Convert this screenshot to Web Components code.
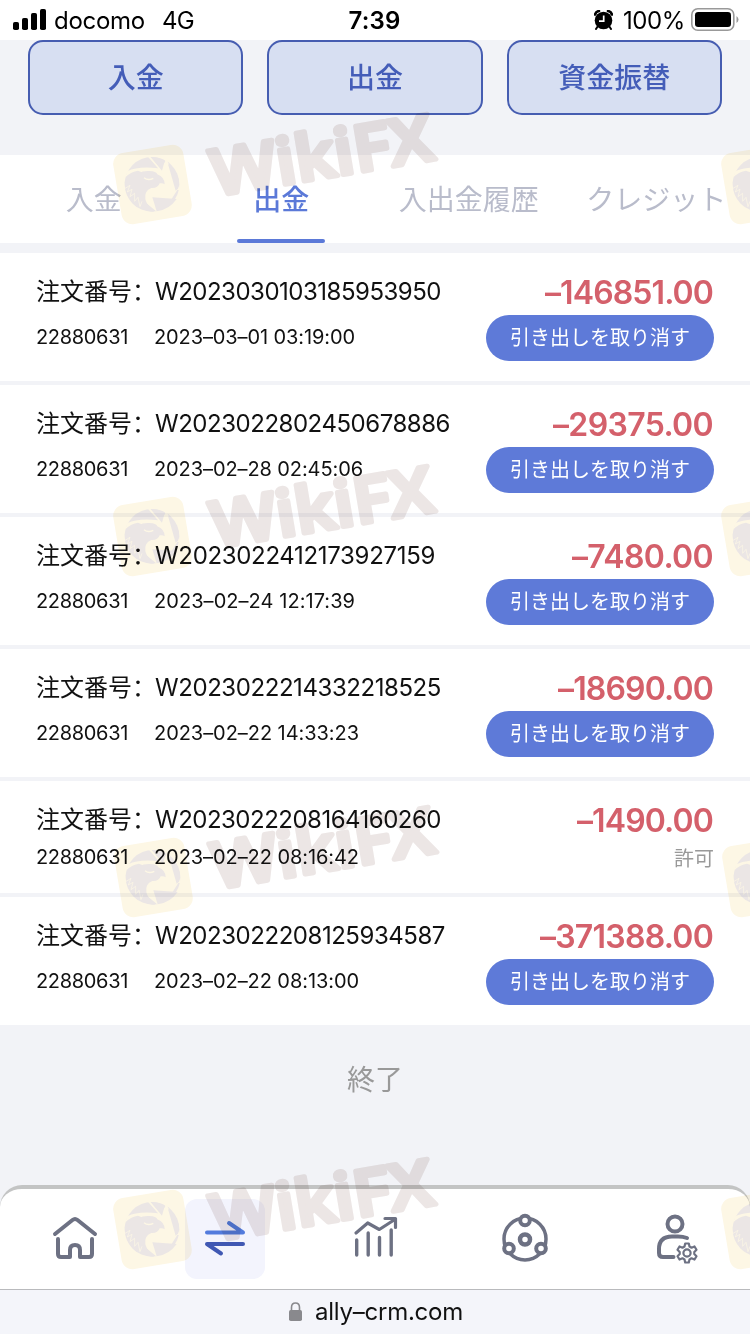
<!DOCTYPE html>
<html lang="ja">
<head>
<meta charset="utf-8">
<title>出金</title>
<style>
  body {
    margin: 0;
    width: 750px;
    height: 1334px;
    overflow: hidden;
    background: #f2f3f7;
    font-family: Inter, "Noto Sans CJK JP", sans-serif;
  }
</style>
</head>
<body>
<crm-page></crm-page>

<template id="status-bar">
  <style>
    :host { display: flex; height: 40px; padding: 0 13px; background: #fff; color: #000; font-size: 24px; }
    div { flex: 1; display: flex; align-items: center; }
    .time { flex: none; line-height: 41px; margin-right: 3px; font-weight: 600; }
    .right { justify-content: flex-end; }
    .net { margin-left: 17px; }
    .signal { margin-right: 8px; }
    .alarm { margin-right: 10px; }
    .battery { margin: 0 0 2px 6px; }
    .right { margin-right: -2px; }
  </style>
  <div>
    <svg class="signal" width="33" height="22" viewBox="0 0 33 22">
      <rect x="0" y="13" width="6" height="8" rx="1.8"/>
      <rect x="9" y="9" width="6" height="12" rx="1.8"/>
      <rect x="18" y="4" width="6" height="17" rx="1.8"/>
      <rect x="27" y="0" width="6" height="21" rx="1.8"/>
    </svg>
    <fit-text width="91">docomo</fit-text>
    <fit-text class="net" width="32">4G</fit-text>
  </div>
  <fit-text class="time" width="52">7:39</fit-text>
  <div class="right">
    <svg class="alarm" width="19" height="20" viewBox="0 0 19 20">
      <circle cx="9.5" cy="10.5" r="8.8"/>
      <path d="M1 4.5Q2 1.5 5 1M18 4.5Q17 1.5 14 1" fill="none" stroke="#000" stroke-width="2.6" stroke-linecap="round"/>
      <path d="M4 16L2 19M15 16L17 19" stroke="#000" stroke-width="2" stroke-linecap="round"/>
      <path d="M9.7 5.5V11.2H5" fill="none" stroke="#fff" stroke-width="1.7"/>
    </svg>
    <fit-text width="62">100%</fit-text>
    <svg class="battery" width="48" height="23" viewBox="0 0 48 23">
      <rect x=".8" y=".8" width="42" height="21.4" rx="6" fill="none" stroke="#999" stroke-width="1.6"/>
      <rect x="4" y="4" width="36" height="15" rx="3.2"/>
      <path d="M45.5 8V15Q47.5 13.500 47.5 11.500Q47.5 9.500 45.5 8" fill="#999"/>
    </svg>
  </div>
</template>

<template id="action-button">
  <style>
    :host {
      flex: 1; display: flex; align-items: center; justify-content: center; box-sizing: border-box;
      height: 75px; padding-bottom: 3px; border: 2px solid #465db1; border-radius: 15px;
      background: #d7dff2; color: #445db8; font-size: 28px; font-weight: 500;
    }
  </style>
  <slot></slot>
</template>

<template id="tab-item">
  <style>
    :host { flex: 1; display: flex; justify-content: center; color: #b9bccb; font-size: 28px; white-space: nowrap; }
    div { display: flex; flex-direction: column; height: 88px; }
    span { height: 84px; padding: 0 16px; line-height: 90px; }
    i { height: 4px; border-radius: 2px; }
    :host([active]) { color: #5b79d8; font-weight: 500; }
    :host([active]) i { background: #5b79d8; }
  </style>
  <div><span><slot></slot></span><i></i></div>
</template>

<template id="order-row">
  <style>
    :host { display: flex; justify-content: space-between; box-sizing: border-box; height: 128px; padding: 23px 36px 0; background: #fff; color: #111; }
    :host([done]) { height: 112px; }
    .title { display: flex; height: 32px; font-size: 24px; line-height: 31px; }
    .title b { width: 120px; line-height: 28px; font-weight: 400; font-family: "Noto Sans CJK SC", sans-serif; }
    .number { margin-left: -1px; }
    .meta { display: flex; align-items: center; height: 46px; margin-top: 6px; gap: 26px; font-size: 20px; }
    .side { display: flex; flex-direction: column; align-items: flex-end; }
    .amount { height: 32px; margin-right: 1px; line-height: 33px; color: #d4606b; font-size: 32px; font-weight: 600; }
    .cancel { height: 46px; margin-top: 7px; padding: 0 24px; border-radius: 23px; background: #5e7ad8; color: #fff; font-size: 20px; line-height: 46px; }
    .state { margin-top: 5px; color: #999; font-size: 20px; line-height: 37px; }
    :host([done]) .meta { height: 30px; }
  </style>
  <div>
    <div class="title"><b lang="zh-CN">注文番号：</b><fit-text class="number"></fit-text></div>
    <div class="meta"><fit-text width="92">22880631</fit-text><fit-text class="date"></fit-text></div>
  </div>
  <div class="side">
    <fit-text class="amount"></fit-text>
    <div class="button"></div>
  </div>
</template>

<template id="nav-bar">
  <style>
    :host { display: block; height: 104px; background: #f2f3f7; }
    nav { display: flex; box-sizing: border-box; height: 104px; border-top: 4px solid #c3c4c4; border-radius: 22px 22px 0 0; background: #fff; }
    a { flex: 1; display: flex; justify-content: center; padding-top: 10px; }
    svg { width: 80px; height: 80px; border-radius: 12px; fill: none; stroke: #6d7183; stroke-width: 4; stroke-linecap: round; stroke-linejoin: round; }
    .active svg { background: #f3f4fd; }
  </style>
  <nav>
    <a><svg viewBox="0 0 80 80">
      <path d="M20 35L37.500 21Q40 19 42.500 21L60 35M23 40V55Q23 58 26 58H35V51Q35 46 40 46Q45 46 45 51V58H54Q57 58 57 55V40"/>
    </svg></a>
    <a class="active"><svg viewBox="0 0 80 80">
      <path d="M22 33.500H58L44 24" stroke="#527bdd"/>
      <path d="M58 45H22L36 54.500" stroke="#4058b3"/>
    </svg></a>
    <a><svg viewBox="0 0 80 80">
      <path d="M21 34L32.700 24L44.300 30.500L59 21M50 19.500H60.500V28.500" stroke-width="3.200"/>
      <path d="M21.700 41V56M33.200 34V56M44.500 38.500V56M56.200 31V56" stroke-width="3.400"/>
    </svg></a>
    <a><svg viewBox="0 0 80 80">
      <circle cx="40" cy="40" r="21" stroke-width="3.500"/>
      <circle cx="40" cy="40.500" r="5" stroke-width="4.500"/>
      <g fill="#fff"><circle cx="40" cy="21.500" r="4.800"/><circle cx="24" cy="49.500" r="4.800"/><circle cx="56" cy="49.500" r="4.800"/></g>
    </svg></a>
    <a><svg viewBox="0 0 80 80">
      <circle cx="40" cy="25" r="7.500"/>
      <path d="M52 39Q48 37.500 43 37.500H37Q24 37.500 24 50V54Q24 58 28 58H38.500"/>
      <g stroke-width="2.200">
        <path d="M50.200 44.500H53.800L54.500 47.500L56.500 48.700L59.500 47.500L61.500 50.800L59.300 53V55L61.500 57.200L59.500 60.500L56.500 59.300L54.500 60.500L53.800 63.500H50.200L49.500 60.500L47.500 59.300L44.500 60.500L42.500 57.200L44.700 55V53L42.500 50.800L44.500 47.500L47.500 48.700L49.500 47.500Z"/>
        <circle cx="52" cy="54" r="3.600"/>
      </g>
    </svg></a>
  </nav>
</template>

<template id="address-bar">
  <style>
    :host { display: flex; justify-content: center; align-items: center; box-sizing: border-box; height: 45px; padding: 0 0 2px 2px; border-top: 1px solid #b9babd; background: #f4f5fa; color: #111; font-size: 24px; }
    svg { margin-right: 13px; }
  </style>
  <svg width="13" height="19" viewBox="0 0 13 19">
    <rect y="8" width="13" height="11" rx="1.800" fill="#89898d"/>
    <path d="M2.500 9V5.500Q2.500 1 6.500 1Q10.500 1 10.500 5.500V9" fill="none" stroke="#89898d" stroke-width="1.600"/>
  </svg>
  <fit-text width="148">ally–crm.com</fit-text>
</template>

<!-- Tiled brand mark laid over the whole page -->
<template id="water-mark">
  <style>
    :host { position: absolute; left: 0; top: 0; width: 750px; height: 1334px; mix-blend-mode: multiply; pointer-events: none; }
    svg { display: block; }
    text { font: 600 64px "Open Sans", sans-serif; fill: #ece6e5; stroke: #ece6e5; stroke-width: 5; stroke-linejoin: round; }
  </style>
  <svg width="750" height="1334" viewBox="0 0 750 1334">
    <defs>
      <g id="logo">
        <rect x="-35.500" y="-36" width="71" height="72" rx="11" fill="#fdf7e5" transform="translate(152.500 184.500) rotate(-9.500)"/>
        <g transform="translate(108 138) scale(.3333)">
          <circle cx="132" cy="139" r="82" fill="#ebe6e5"/>
          <path d="M58 100Q90 84 150 91L116 52L124 52L162 98L171 66L178 68L216 156L208 156L176 206L168 224L150 224L108 190L100 150L120 110L90 98Q70 100 52 118Z" fill="#fdf7e5"/>
          <path d="M128 57Q153 57 172 70L158 91Z" fill="#ebe6e5"/>
          <path d="M180 78Q208 98 213 132Q213 146 210 152L203 158Z" fill="#ebe6e5"/>
          <path d="M133 178L206 183Q184 215 146 220Z" fill="#ebe6e5"/>
          <path d="M50 132Q65 106 92 106Q104 98 124 99Q146 100 148 109Q170 118 170 139Q164 134 155 136Q150 151 130 150Q108 158 112 184Q118 205 138 221Q102 221 76 196Q54 176 50 132Z" fill="#ebe6e5"/>
          <path d="M50 152L66 142L58 162L72 154L66 176L80 166L80 190L90 178L96 206L102 190" fill="none" stroke="#fdf7e5" stroke-width="2"/>
          <path d="M108 119Q120 129 136 121" fill="none" stroke="#fdf7e5" stroke-width="4"/>
        </g>
      </g>
      <g id="mark">
        <use href="#logo"/>
        <use href="#logo" x="608"/>
      </g>
    </defs>
    <g class="tiles"></g>
  </svg>
</template>

<template id="crm-page">
  <style>
    :host { display: flex; flex-direction: column; position: relative; width: 750px; height: 1334px; }
    .actions { display: flex; gap: 24px; height: 115px; padding: 0 28px; }
    .tabs { display: flex; height: 88px; margin-bottom: 10px; background: #fff; overflow: hidden; }
    .orders { display: flex; flex-direction: column; gap: 4px; }
    .end { flex: 1; padding-top: 35px; color: #999; font-size: 28px; line-height: 40px; text-align: center; }
  </style>
  <status-bar></status-bar>
  <div class="actions">
    <action-button>入金</action-button>
    <action-button>出金</action-button>
    <action-button>資金振替</action-button>
  </div>
  <div class="tabs">
    <tab-item>入金</tab-item>
    <tab-item active>出金</tab-item>
    <tab-item>入出金履歴</tab-item>
    <tab-item>クレジット</tab-item>
  </div>
  <div class="orders"></div>
  <div class="end">終了</div>
  <nav-bar></nav-bar>
  <address-bar></address-bar>
  <water-mark></water-mark>
</template>

<script>
  class BaseElement extends HTMLElement {
    constructor() {
      super();
      this.attachShadow({mode: 'open'});
    }
    connectedCallback() {
      const template = document.getElementById(this.localName);
      this.shadowRoot.appendChild(template.content.cloneNode(true));
      this.render();
    }
    render() {}
    $(selector) {
      return this.shadowRoot.querySelector(selector);
    }
  }

  // Tracks its text in or out so that it fills the given width
  class FitText extends HTMLElement {
    constructor() {
      super();
      this.attachShadow({mode: 'open'}).innerHTML = `
        <style>:host { display: block; white-space: nowrap; } span { display: inline-block; }</style>
        <span><slot></slot></span>`;
    }
    static get observedAttributes() {
      return ['width'];
    }
    connectedCallback() {
      this.fit();
    }
    attributeChangedCallback() {
      this.fit();
    }
    fit() {
      const width = Number(this.getAttribute('width'));
      const span = this.shadowRoot.querySelector('span');
      if (!this.isConnected || !width || !this.textContent) return;
      span.style.letterSpacing = '0px';
      const spacing = (width - span.getBoundingClientRect().width) / this.textContent.length;
      span.style.letterSpacing = `${spacing}px`;
    }
  }

  class OrderRow extends BaseElement {
    render() {
      this.fill('.number', 'number');
      this.fill('.date', 'date');
      this.fill('.amount', 'amount');
      const $button = this.$('.button');
      $button.className = this.hasAttribute('done') ? 'state' : 'cancel';
      $button.textContent = this.hasAttribute('done') ? '許可' : '引き出しを取り消す';
    }
    fill(selector, name) {
      const [text, width] = this.getAttribute(name).split('|');
      const $text = this.$(selector);
      $text.textContent = text;
      $text.setAttribute('width', width);
    }
  }

  class WaterMark extends BaseElement {
    render() {
      this.$('.tiles').innerHTML = [0, 352, 693, 1045].map(y => `
        <g transform="translate(${y === 693 ? 1 : 0} ${y})">
          <use href="#mark"/>
          <text transform="translate(215 196) rotate(-9.5)" textLength="224" lengthAdjust="spacingAndGlyphs">WikiFX</text>
        </g>`).join('');
    }
  }

  // text|width for each field
  const orders = [
    ['W2023030103185953950|286', '2023–03–01 03:19:00|201', '–146851.00|168'],
    ['W2023022802450678886|295', '2023–02–28 02:45:06|209', '–29375.00|160'],
    ['W2023022412173927159|280', '2023–02–24 12:17:39|201', '–7480.00|141'],
    ['W2023022214332218525|286', '2023–02–22 14:33:23|205', '–18690.00|155'],
    ['W2023022208164160260|286', '2023–02–22 08:16:42|205', '–1490.00|136', true],
    ['W2023022208125934587|290', '2023–02–22 08:13:00|205', '–371388.00|173']
  ];

  class CrmPage extends BaseElement {
    render() {
      this.$('.orders').innerHTML = orders.map(([number, date, amount, done]) =>
        `<order-row number="${number}" date="${date}" amount="${amount}"${done ? ' done' : ''}></order-row>`
      ).join('');
    }
  }

  customElements.define('fit-text', FitText);
  customElements.define('status-bar', class extends BaseElement {});
  customElements.define('action-button', class extends BaseElement {});
  customElements.define('tab-item', class extends BaseElement {});
  customElements.define('order-row', OrderRow);
  customElements.define('nav-bar', class extends BaseElement {});
  customElements.define('address-bar', class extends BaseElement {});
  customElements.define('water-mark', WaterMark);
  customElements.define('crm-page', CrmPage);
</script>
</body>
</html>
